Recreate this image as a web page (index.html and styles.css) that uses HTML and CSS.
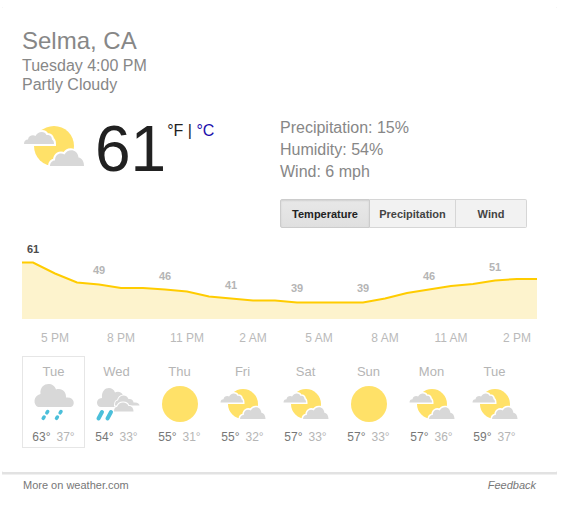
FILE: index.html
```html
<!DOCTYPE html>
<html lang="en">
<head>
<meta charset="utf-8">
<title>Weather for Selma, CA</title>
<link rel="stylesheet" href="styles.css">
</head>
<body>
<svg class="defs" aria-hidden="true">
  <symbol id="partly" viewBox="0 0 64 64">
    <circle cx="32" cy="32" r="20" fill="#ffe168"/>
    <path d="M2 30c0-3 1.500-4.500 4-4.500.5-4 5-5 7.500-3.500 2.500-5 9.500-5 11-1 4-.5 5.500 2 5.500 4.500 1.500.5 2 2.500 2 4.500z" fill="#d8d8d8" stroke="#fff" stroke-width="4" paint-order="stroke"/>
    <path d="M28 52c0-3 2-5.500 5-5.500 0-6 5-8.500 9.500-6 3-6 13-6 14 3 3.500.5 5.500 4 5.500 8.500z" fill="#d8d8d8" stroke="#fff" stroke-width="4" paint-order="stroke"/>
  </symbol>
  <symbol id="sunny" viewBox="0 0 64 64"><circle cx="32" cy="32" r="24" fill="#ffe168"/></symbol>
  <symbol id="rain" viewBox="0 0 48 48">
    <path d="M8 27C3 25 3 15.500 10.500 14 9 2 24 1 26 9.500 32 7.500 36.500 12 36 17.500c9-1 9.500 8 5 9.500z" fill="#d8d8d8"/>
    <g stroke="#4bbfda" stroke-width="3.500" stroke-linecap="round">
      <path d="M17.700 31.500l-.9 1.400M14.100 37l-.9 1.400M31 31.500l-.9 1.400M27.400 37l-.9 1.400"/>
    </g>
  </symbol>
  <symbol id="scattered" viewBox="0 0 48 48">
    <path d="M8 27C3 27 2 18.500 9 18 8 6 20 5.500 22 12.500c3-1.500 7-.5 8 3L24 27z" fill="#d8d8d8"/>
    <g fill="#d8d8d8" stroke="#fff" stroke-width="2" paint-order="stroke">
      <path d="M22 25.500c0-4 1-5 3-5 1-6 8.500-6.500 10.500-1.500 3-.5 5 1.500 5 3.500 4-.5 6 1 6 3z"/>
      <path d="M21 31.500c0-3 1-4.500 3-4.500 2-6 10-5.500 11.500-1 3-.5 5 2 5 5.500z"/>
    </g>
    <path d="M9 32l-3.500 6.500M18 32l-3.500 6.500" stroke="#4bbfda" stroke-width="4" stroke-linecap="round"/>
  </symbol>
</svg>
<main class="card">
  <header>
    <h1 class="place">Selma, CA</h1>
    <div class="summary">Tuesday 4:00 PM</div>
    <div class="summary">Partly Cloudy</div>
  </header>
  <section class="current">
    <div class="now">
      <svg class="now-icon" role="img" aria-label="Partly Cloudy"><use href="#partly"/></svg>
      <span class="degrees">61</span>
      <span class="units">°F | <a href="#celsius">°C</a></span>
    </div>
    <div class="details">
      <div>Precipitation: 15%</div>
      <div>Humidity: 54%</div>
      <div>Wind: 6 mph</div>
      <div class="tabs">
        <button type="button" class="tab selected">Temperature</button>
        <button type="button" class="tab">Precipitation</button>
        <button type="button" class="tab">Wind</button>
      </div>
    </div>
  </section>
  <svg class="chart" viewBox="0 0 515 106" role="img" aria-label="Hourly temperature">
    <path class="area" d="M0 22.500H11L33 33.500 55 42.500 77 44.500 99 48H121L143 49.500 165 51.500 187 56.500 209 58.500 231 60.500H253L275 62.500H341L363 58.500 385 53 407 49.500 429 46 451 44 473 40.500 495 39H515V79H0z"/>
    <path class="line" d="M0 22.500H11L33 33.500 55 42.500 77 44.500 99 48H121L143 49.500 165 51.500 187 56.500 209 58.500 231 60.500H253L275 62.500H341L363 58.500 385 53 407 49.500 429 46 451 44 473 40.500 495 39H515"/>
    <g class="values">
      <text class="first" x="11" y="13">61</text><text x="77" y="34">49</text><text x="143" y="40">46</text><text x="209" y="49">41</text><text x="275" y="52">39</text><text x="341" y="52">39</text><text x="407" y="40">46</text><text x="473" y="31">51</text>
    </g>
    <g class="hours">
      <text x="33" y="102">5 PM</text><text x="99" y="102">8 PM</text><text x="165" y="102">11 PM</text><text x="231" y="102">2 AM</text><text x="297" y="102">5 AM</text><text x="363" y="102">8 AM</text><text x="429" y="102">11 AM</text><text x="495" y="102">2 PM</text>
    </g>
  </svg>
  <section class="days">
    <div class="day today"><span>Tue</span><svg><use href="#rain"/></svg><div class="range"><b>63°</b><span>37°</span></div></div>
    <div class="day"><span>Wed</span><svg><use href="#scattered"/></svg><div class="range"><b>54°</b><span>33°</span></div></div>
    <div class="day"><span>Thu</span><svg><use href="#sunny"/></svg><div class="range"><b>55°</b><span>31°</span></div></div>
    <div class="day"><span>Fri</span><svg><use href="#partly"/></svg><div class="range"><b>55°</b><span>32°</span></div></div>
    <div class="day"><span>Sat</span><svg><use href="#partly"/></svg><div class="range"><b>57°</b><span>33°</span></div></div>
    <div class="day"><span>Sun</span><svg><use href="#sunny"/></svg><div class="range"><b>57°</b><span>33°</span></div></div>
    <div class="day"><span>Mon</span><svg><use href="#partly"/></svg><div class="range"><b>57°</b><span>36°</span></div></div>
    <div class="day"><span>Tue</span><svg><use href="#partly"/></svg><div class="range"><b>59°</b><span>37°</span></div></div>
  </section>
</main>
<footer class="footer">
  <a href="#more">More on weather.com</a>
  <a class="feedback" href="#feedback">Feedback</a>
</footer>
</body>
</html>
```
FILE: styles.css
```css
* { box-sizing: border-box; }
body {
  margin: 7px 16px 0 2px;
  background: #fff;
  color: #878787;
  font-family: "Liberation Sans", Arial, sans-serif;
  font-size: 16px;
}
.defs { display: none; }
.card {
  padding: 20px 20px 24px;
  border-radius: 1px;
  box-shadow: 0 1px 0 1px #e2e2e2, 0 1px 0 2px #f0f0f0;
}
.place { margin: 0 0 1px; font-size: 24px; font-weight: 400; line-height: 28px; }
.summary { line-height: 19px; }
.current { display: flex; margin-top: 20px; }
.now { display: flex; flex: 1; }
.now-icon { width: 64px; height: 64px; }
.degrees { margin-left: 9px; color: #212121; font-size: 64px; line-height: 70px; }
.units { margin-top: 8px; margin-left: 1px; line-height: 18px; color: #212121; }
.units a { color: #1a0dab; text-decoration: none; }
.details { flex: none; width: 257px; padding-top: 3px; line-height: 22px; }
.tabs { display: flex; width: 247px; margin-top: 16px; }
.tab {
  flex: 0 0 86px;
  height: 29px;
  padding: 0;
  border: 1px solid #d6d6d6;
  border-left-width: 0;
  background: #f2f2f2;
  color: #444;
  font: bold 11px "Liberation Sans", Arial, sans-serif;
}
.tab:last-child { flex: 1; border-radius: 0 2px 2px 0; }
.tab.selected {
  flex-basis: 90px;
  border: 1px solid #ccc;
  border-radius: 2px 0 0 2px;
  background: linear-gradient(#e8e8e8, #e0e0e0);
  box-shadow: inset 0 1px 2px rgba(0, 0, 0, .1);
  color: #222;
}
.chart { display: block; width: 100%; margin-top: 12px; }
.area { fill: #fdf3cd; }
.line { fill: none; stroke: #fc0; stroke-width: 2; }
.values { fill: #b5b5b5; font-size: 11px; font-weight: bold; text-anchor: middle; }
.values .first { fill: #4c4c4c; }
.hours { fill: #bababa; font-size: 12px; text-anchor: middle; }
.days { display: flex; margin-top: 10px; }
.day {
  display: flex;
  flex: 0 1 63px;
  flex-direction: column;
  align-items: center;
  height: 92px;
  padding-top: 7px;
  border: 1px solid transparent;
  color: #b5b5b5;
  font-size: 13px;
  line-height: 16px;
}
.day.today { border-color: #e6e6e6; }
.day svg { width: 48px; height: 48px; }
.range { display: flex; gap: 6px; padding-top: 1px; font-size: 12px; }
.range b { color: #777; font-weight: 400; }
.footer {
  display: flex;
  justify-content: space-between;
  padding: 7px 21px;
  font-size: 11px;
  line-height: 13px;
}
.footer a { color: #777; text-decoration: none; }
.feedback { font-style: italic; }
```
